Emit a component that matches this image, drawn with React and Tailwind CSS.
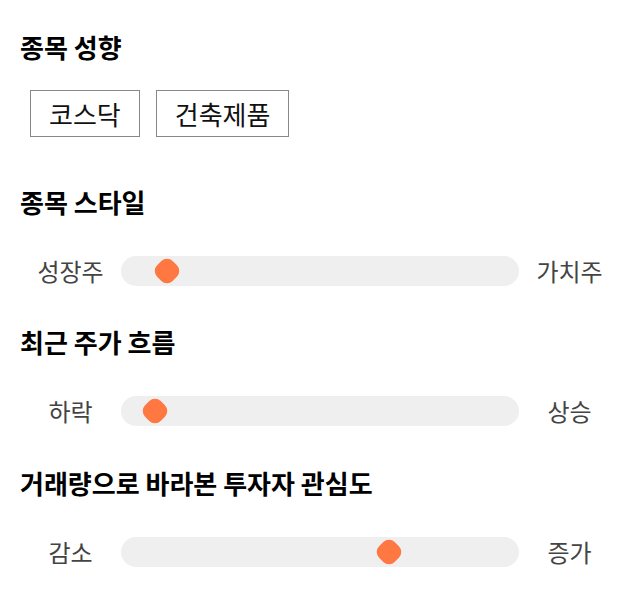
import { useState } from "react";

const FONT = { fontFamily: '"Noto Sans CJK KR", "Noto Sans", sans-serif' };

const sliders = [
  { title: "종목 스타일", left: "성장주", right: "가치주", value: 46, gap: "mt-[49px]" },
  { title: "최근 주가 흐름", left: "하락", right: "상승", value: 34, gap: "mt-[40px]" },
  { title: "거래량으로 바라본 투자자 관심도", left: "감소", right: "증가", value: 268, gap: "mt-[41px]" },
];

function Slider({ left, right, value }) {
  return (
    <div className="flex items-center h-[30px] mt-[38px]">
      <span className="w-[101px] text-center text-[24px] leading-[30px] text-[#444]">{left}</span>
      <div className="relative w-[398px] h-[30px] rounded-full bg-[#efefef]">
        <div
          className="absolute top-[4px] w-[22px] h-[22px] rotate-45 rounded-[8px] bg-[#ff7741]"
          style={{ left: value - 11 }}
        />
      </div>
      <span className="w-[101px] text-center text-[24px] leading-[30px] text-[#444]">{right}</span>
    </div>
  );
}

export default function App() {
  const [tags] = useState(["코스닥", "건축제품"]);
  return (
    <div className="w-[640px] h-[606px] bg-white px-5 pt-[31px]" style={FONT}>
      <h2 className="h-[32px] leading-[32px] text-[26px] font-bold text-black">종목 성향</h2>
      <div className="flex gap-4 ml-[10px] mt-[27px]">
        {tags.map((t) => (
          <div key={t} className="h-[47px] px-[18px] flex items-center border border-[#888] text-[26px] text-[#111]">
            {t}
          </div>
        ))}
      </div>
      {sliders.map((s) => (
        <div key={s.title} className={s.gap}>
          <h2 className="h-[32px] leading-[32px] text-[26px] font-bold text-black">{s.title}</h2>
          <Slider left={s.left} right={s.right} value={s.value} />
        </div>
      ))}
    </div>
  );
}
